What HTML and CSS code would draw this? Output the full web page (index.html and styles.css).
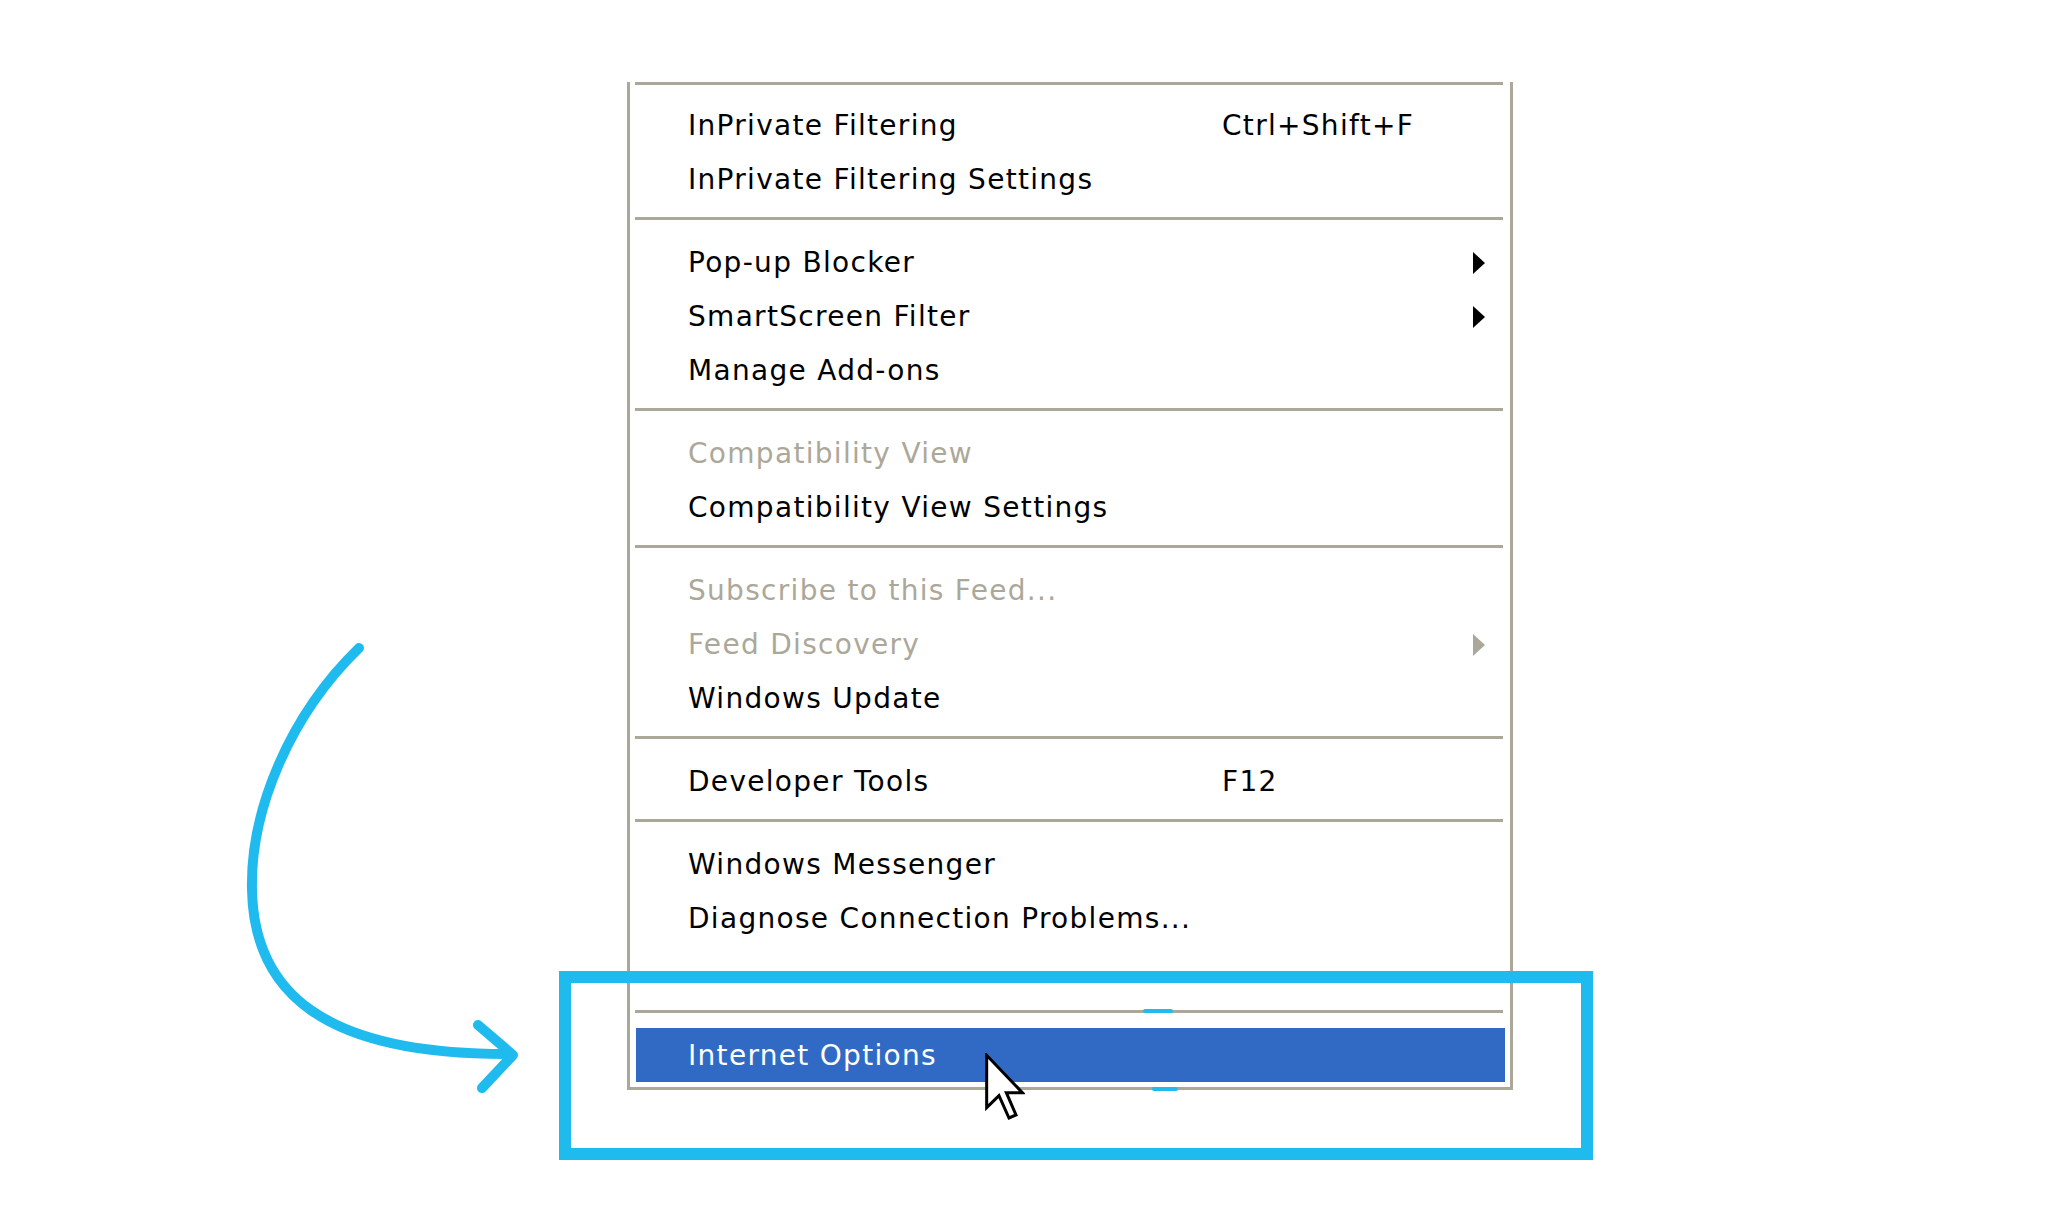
FILE: index.html
```html
<!DOCTYPE html>
<html lang="en">
<head>
    <meta charset="UTF-8">
    <meta name="viewport" content="width=device-width, initial-scale=1.0">
    <title>Tools menu - Internet Options</title>
    <link rel="stylesheet" href="styles.css">
</head>
<body>
    <div class="canvas">
        <div class="menu">
            <div class="sep sep-top"></div>
            <div class="item"><span class="label">InPrivate Filtering</span><span class="key">Ctrl+Shift+F</span></div>
            <div class="item"><span class="label">InPrivate Filtering Settings</span></div>
            <div class="sep"></div>
            <div class="item"><span class="label">Pop-up Blocker</span><span></span><span class="sub"></span></div>
            <div class="item"><span class="label">SmartScreen Filter</span><span></span><span class="sub"></span></div>
            <div class="item"><span class="label">Manage Add-ons</span></div>
            <div class="sep"></div>
            <div class="item disabled"><span class="label">Compatibility View</span></div>
            <div class="item"><span class="label">Compatibility View Settings</span></div>
            <div class="sep"></div>
            <div class="item disabled"><span class="label">Subscribe to this Feed...</span></div>
            <div class="item disabled"><span class="label">Feed Discovery</span><span></span><span class="sub"></span></div>
            <div class="item"><span class="label">Windows Update</span></div>
            <div class="sep"></div>
            <div class="item"><span class="label">Developer Tools</span><span class="key">F12</span></div>
            <div class="sep"></div>
            <div class="item"><span class="label">Windows Messenger</span></div>
            <div class="item"><span class="label">Diagnose Connection Problems...</span></div>
            <div class="item"></div>
            <div class="sep"></div>
            <div class="item active"><span class="label">Internet Options</span></div>
        </div>

        <!-- annotation overlays -->
        <span class="arc arc-top"></span>
        <span class="arc arc-bottom"></span>
        <div class="focus-frame"></div>

        <svg class="pointer-arrow" width="600" height="1212" viewBox="0 0 600 1212">
            <path d="M359 648 C290 715 250 810 252 890 C254 990 320 1055 510 1054" />
            <path d="M478 1025 L513 1055 L482 1088" />
        </svg>

        <svg class="cursor" width="40" height="68" viewBox="0 0 12 20">
            <polygon points="0.5,0.5 0.5,16.2 4.2,12.6 7.2,19.3 9.3,18.4 6.4,11.7 11.2,11.7" />
        </svg>
    </div>
</body>
</html>
```

FILE: styles.css
```css
body {
    margin: 0;
    background: #fff;
    font-family: "DejaVu Sans", Verdana, sans-serif;
}
.canvas {
    position: relative;
    width: 2064px;
    height: 1212px;
    padding-top: 82px;
    box-sizing: border-box;
    overflow: hidden;
}
.menu {
    width: 880px;
    margin-left: 627px;
    padding-bottom: 5px;
    border: 3px solid #aca899;
    border-top: none;
    background: #fff;
}
.sep {
    height: 3px;
    margin: 11px 7px 15px 5px;
    background: #aca899;
}
.sep-top {
    margin-top: 0;
    margin-bottom: 13px;
}
.item {
    display: grid;
    grid-template-columns: 534px 1fr 12px;
    align-items: center;
    height: 54px;
    margin: 0 5px 0 6px;
    padding: 1px 20px 0 52px;
    box-sizing: border-box;
    font-size: 28px;
    letter-spacing: 1.3px;
    color: #000;
    white-space: nowrap;
}
.item.disabled {
    color: #aca899;
}
.item.active {
    background: #316ac5;
    color: #fff;
}
.sub {
    width: 0;
    height: 0;
    border-left: 12px solid #000;
    border-top: 11px solid transparent;
    border-bottom: 11px solid transparent;
}
.disabled .sub {
    border-left-color: #aca899;
}
.focus-frame {
    position: absolute;
    left: 559px;
    top: 971px;
    width: 1034px;
    height: 189px;
    box-sizing: border-box;
    border: 12px solid #1fbbee;
}
.arc {
    position: absolute;
    height: 4px;
    border-radius: 2px;
    background: #1fbbee;
}
.arc-top {
    left: 1143px;
    top: 1009px;
    width: 30px;
}
.arc-bottom {
    left: 1152px;
    top: 1087px;
    width: 26px;
}
.pointer-arrow {
    position: absolute;
    left: 0;
    top: 0;
}
.pointer-arrow path {
    fill: none;
    stroke: #1fbbee;
    stroke-width: 10;
    stroke-linecap: round;
    stroke-linejoin: round;
}
.cursor {
    position: absolute;
    left: 985px;
    top: 1053px;
}
.cursor polygon {
    fill: #fff;
    stroke: #000;
    stroke-width: 0.9;
    stroke-linejoin: miter;
}
```
